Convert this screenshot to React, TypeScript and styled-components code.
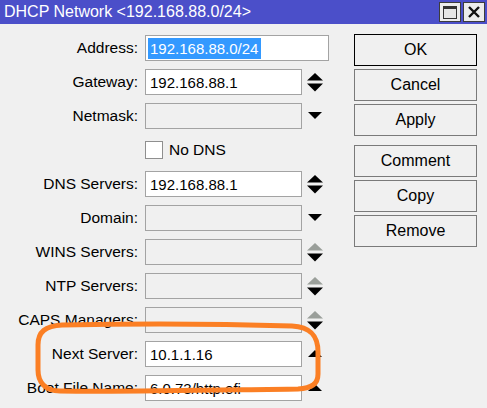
import React from 'react'
import styled, { createGlobalStyle } from 'styled-components'

const Global = createGlobalStyle`
html, body {
  margin: 0;
  padding: 0;
  background: #f0f0f0;
  font-family: 'Liberation Sans', Arial, sans-serif;
  overflow: hidden;
}
`

const Window = styled.div`
position: relative;
width: 487px;
height: 408px;
background: #f0f0f0;
overflow: hidden;
`

const TitleBar = styled.div`
height: 24px;
background: #4b4fc9;
display: flex;
align-items: center;
justify-content: space-between;
padding: 0 2px 0 4px;
`

const Title = styled.div`
color: #fff;
font-size: 16px;
white-space: nowrap;
`

const TitleButtons = styled.div`
display: flex;
gap: 2px;
`

const TitleButton = styled.div`
width: 22px;
height: 20px;
box-sizing: border-box;
border: 1px solid #3c3c3c;
background: #ececec;
display: flex;
align-items: center;
justify-content: center;
`

const Body = styled.div`
display: flex;
padding-top: 10px;
`

const Form = styled.div`
width: 330px;
flex: none;
display: flex;
flex-direction: column;
gap: 8px;
margin-top: 1px;
`

const Row = styled.div`
display: flex;
align-items: center;
height: 26px;
`

const Label = styled.div`
width: 138px;
margin-right: 7px;
text-align: right;
font-size: 15.5px;
color: #000;
white-space: nowrap;
`

const Field = styled.div<{ $wide?: boolean; $empty?: boolean }>`
width: ${p => (p.$wide ? '184px' : '157px')};
height: 26px;
box-sizing: border-box;
border: 1px solid #a3a3a3;
background: ${p => (p.$empty ? '#f0f0f0' : '#fff')};
padding: 0 4px;
display: flex;
align-items: center;
font-size: 15px;
color: #000;
white-space: nowrap;
overflow: hidden;
`

const Selected = styled.span`
background: #3399ff;
color: #fff;
margin-left: -2px;
padding: 0 3px 0 2px;
line-height: 21px;
`

const Spin = styled.div`
width: 16px;
margin-left: 5px;
display: flex;
align-items: center;
justify-content: center;
`

const Check = styled.div`
width: 18px;
height: 18px;
box-sizing: border-box;
border: 1px solid #8f8f8f;
background: #fff;
`

const CheckText = styled.span`
margin-left: 6px;
font-size: 15.5px;
`

const Buttons = styled.div`
margin-left: 24px;
display: flex;
flex-direction: column;
gap: 3px;
`

const Button = styled.div<{ $primary?: boolean; $space?: boolean }>`
width: 123px;
height: 32px;
box-sizing: border-box;
border: 1px solid ${p => (p.$primary ? '#000' : '#7a7a7a')};
background: #f0f0f0;
display: flex;
align-items: center;
justify-content: center;
font-size: 16px;
margin-top: ${p => (p.$space ? '6px' : '0')};
`

const Annotation = styled.svg`
position: absolute;
left: 0;
top: 0;
pointer-events: none;
`

type Arrow = 'updown' | 'down' | 'grayup' | 'up' | 'none'

const ArrowIcon = ({ kind }: { kind: Arrow }) => {
  if (kind === 'none') return null
  if (kind === 'down')
    return (
      <svg width="16" height="8" viewBox="0 0 16 8">
        <path d="M1 0 L15 0 L8 7 Z" fill="#000" />
      </svg>
    )
  if (kind === 'up')
    return (
      <svg width="16" height="8" viewBox="0 0 16 8">
        <path d="M1 7 L15 7 L8 0 Z" fill="#000" />
      </svg>
    )
  return (
    <svg width="16" height="19" viewBox="0 0 16 19">
      <path d="M0 7.5 L8 0 L16 7.5 Z" fill={kind === 'grayup' ? '#9a9f9a' : '#000'} />
      <path d="M0 10.5 L16 10.5 L8 18.5 Z" fill="#000" />
    </svg>
  )
}

const rows: { label: string; value?: string; arrow: Arrow }[] = [
  { label: 'DNS Servers:', value: '192.168.88.1', arrow: 'updown' },
  { label: 'Domain:', arrow: 'down' },
  { label: 'WINS Servers:', arrow: 'grayup' },
  { label: 'NTP Servers:', arrow: 'grayup' },
  { label: 'CAPS Managers:', arrow: 'grayup' },
  { label: 'Next Server:', value: '10.1.1.16', arrow: 'up' },
  { label: 'Boot File Name:', value: '6.0.73/http.efi', arrow: 'up' },
]

export default function App() {
  return (
    <Window>
      <Global />
      <TitleBar>
        <Title>DHCP Network &lt;192.168.88.0/24&gt;</Title>
        <TitleButtons>
          <TitleButton>
            <svg width="14" height="13" viewBox="0 0 14 13">
              <rect x="0.5" y="0.5" width="13" height="12" fill="#e6e6e6" stroke="#333" />
              <rect x="0.5" y="0.5" width="13" height="2.5" fill="#333" />
            </svg>
          </TitleButton>
          <TitleButton>
            <svg width="12" height="12" viewBox="0 0 12 12">
              <path d="M1 1 L11 11 M11 1 L1 11" stroke="#111" strokeWidth="2.4" />
            </svg>
          </TitleButton>
        </TitleButtons>
      </TitleBar>
      <Body>
        <Form>
          <Row>
            <Label>Address:</Label>
            <Field $wide>
              <Selected>192.168.88.0/24</Selected>
            </Field>
          </Row>
          <Row>
            <Label>Gateway:</Label>
            <Field>192.168.88.1</Field>
            <Spin>
              <ArrowIcon kind="updown" />
            </Spin>
          </Row>
          <Row>
            <Label>Netmask:</Label>
            <Field $empty />
            <Spin>
              <ArrowIcon kind="down" />
            </Spin>
          </Row>
          <Row>
            <Label />
            <Check />
            <CheckText>No DNS</CheckText>
          </Row>
          {rows.map(r => (
            <Row key={r.label}>
              <Label>{r.label}</Label>
              <Field $empty={!r.value}>{r.value}</Field>
              <Spin>
                <ArrowIcon kind={r.arrow} />
              </Spin>
            </Row>
          ))}
        </Form>
        <Buttons>
          <Button $primary>OK</Button>
          <Button>Cancel</Button>
          <Button>Apply</Button>
          <Button $space>Comment</Button>
          <Button>Copy</Button>
          <Button>Remove</Button>
        </Buttons>
      </Body>
      <Annotation width="487" height="408" viewBox="0 0 487 408">
        <path
          d="M62 325 C150 323 230 324 292 326 C311 327 318 336 318 352 L318 374 C318 384 312 388 298 389 C220 390 130 392 60 391 C45 391 38 382 38 370 L38 345 C38 332 45 326 62 325 Z"
          fill="none"
          stroke="#fb7f24"
          strokeWidth="5"
        />
      </Annotation>
    </Window>
  )
}
